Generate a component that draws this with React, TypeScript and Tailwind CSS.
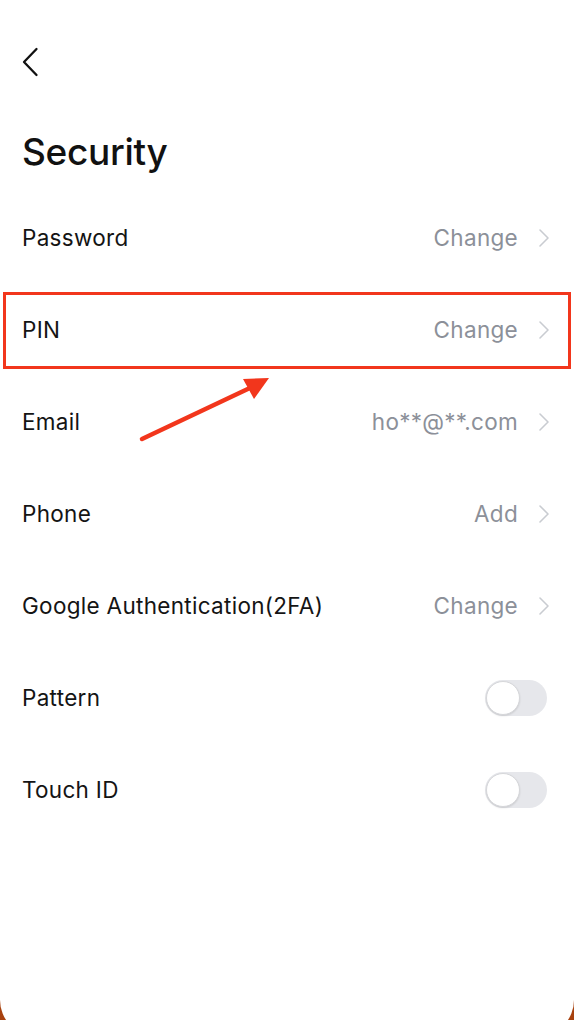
type Row = {
  label: string
  value?: string
  toggle?: boolean
}

const rows: Row[] = [
  { label: 'Password', value: 'Change' },
  { label: 'PIN', value: 'Change' },
  { label: 'Email', value: 'ho**@**.com' },
  { label: 'Phone', value: 'Add' },
  { label: 'Google Authentication(2FA)', value: 'Change' },
  { label: 'Pattern', toggle: true },
  { label: 'Touch ID', toggle: true },
]

function Chevron() {
  return (
    <svg width="12" height="20" viewBox="0 0 12 20" className="ml-[20px]" fill="none">
      <path d="M2 2l8 8-8 8" stroke="#c9ccd1" strokeWidth="1.6" strokeLinecap="round" strokeLinejoin="round" />
    </svg>
  )
}

function Toggle() {
  return (
    <div className="mr-[3px] w-[62px] h-[36px] rounded-full bg-[#e6e7eb] flex items-center px-[1px]">
      <div className="w-[34px] h-[34px] rounded-full bg-white border border-[#d6d7da] shadow-[0_1px_2px_rgba(0,0,0,0.12)]" />
    </div>
  )
}

export default function App() {
  return (
    <div className="h-[1020px] overflow-hidden bg-[#a8420f]" style={{ fontFamily: 'Inter, "Noto Sans", sans-serif' }}>
      <div className="relative h-[1036px] bg-white rounded-b-[36px]">
        <div className="pt-[47px] pl-[21px]">
          <svg width="18" height="30" viewBox="0 0 18 30" fill="none">
            <path d="M15.5 2L3 15l12.5 13" stroke="#111" strokeWidth="2.3" strokeLinecap="round" strokeLinejoin="round" />
          </svg>
        </div>
        <h1 className="mt-[53px] px-[22px] text-[37px] leading-[44px] font-medium text-[#111] tracking-[-0.3px]">
          Security
        </h1>
        <div className="mt-[18px]">
          {rows.map((row) => (
            <div key={row.label} className="h-[92px] flex items-center justify-between pl-[22px] pr-[24px] text-[22.5px] tracking-[0.3px]">
              <span className="text-[#141414]">{row.label}</span>
              {row.toggle ? (
                <Toggle />
              ) : (
                <div className="flex items-center">
                  <span className="text-[#8c9099]">{row.value}</span>
                  <Chevron />
                </div>
              )}
            </div>
          ))}
        </div>

        {/* annotation around PIN row */}
        <div className="absolute left-[3px] top-[292px] w-[568px] h-[77px] border-[3px] border-[#f2361c]" />
        <svg className="absolute left-0 top-0" width="574" height="460" viewBox="0 0 574 460" fill="none">
          <line x1="142" y1="439" x2="252" y2="387" stroke="#f2361c" strokeWidth="4.5" strokeLinecap="round" />
          <polygon points="269,378 243,379 254,399" fill="#f2361c" />
        </svg>
      </div>
    </div>
  )
}
